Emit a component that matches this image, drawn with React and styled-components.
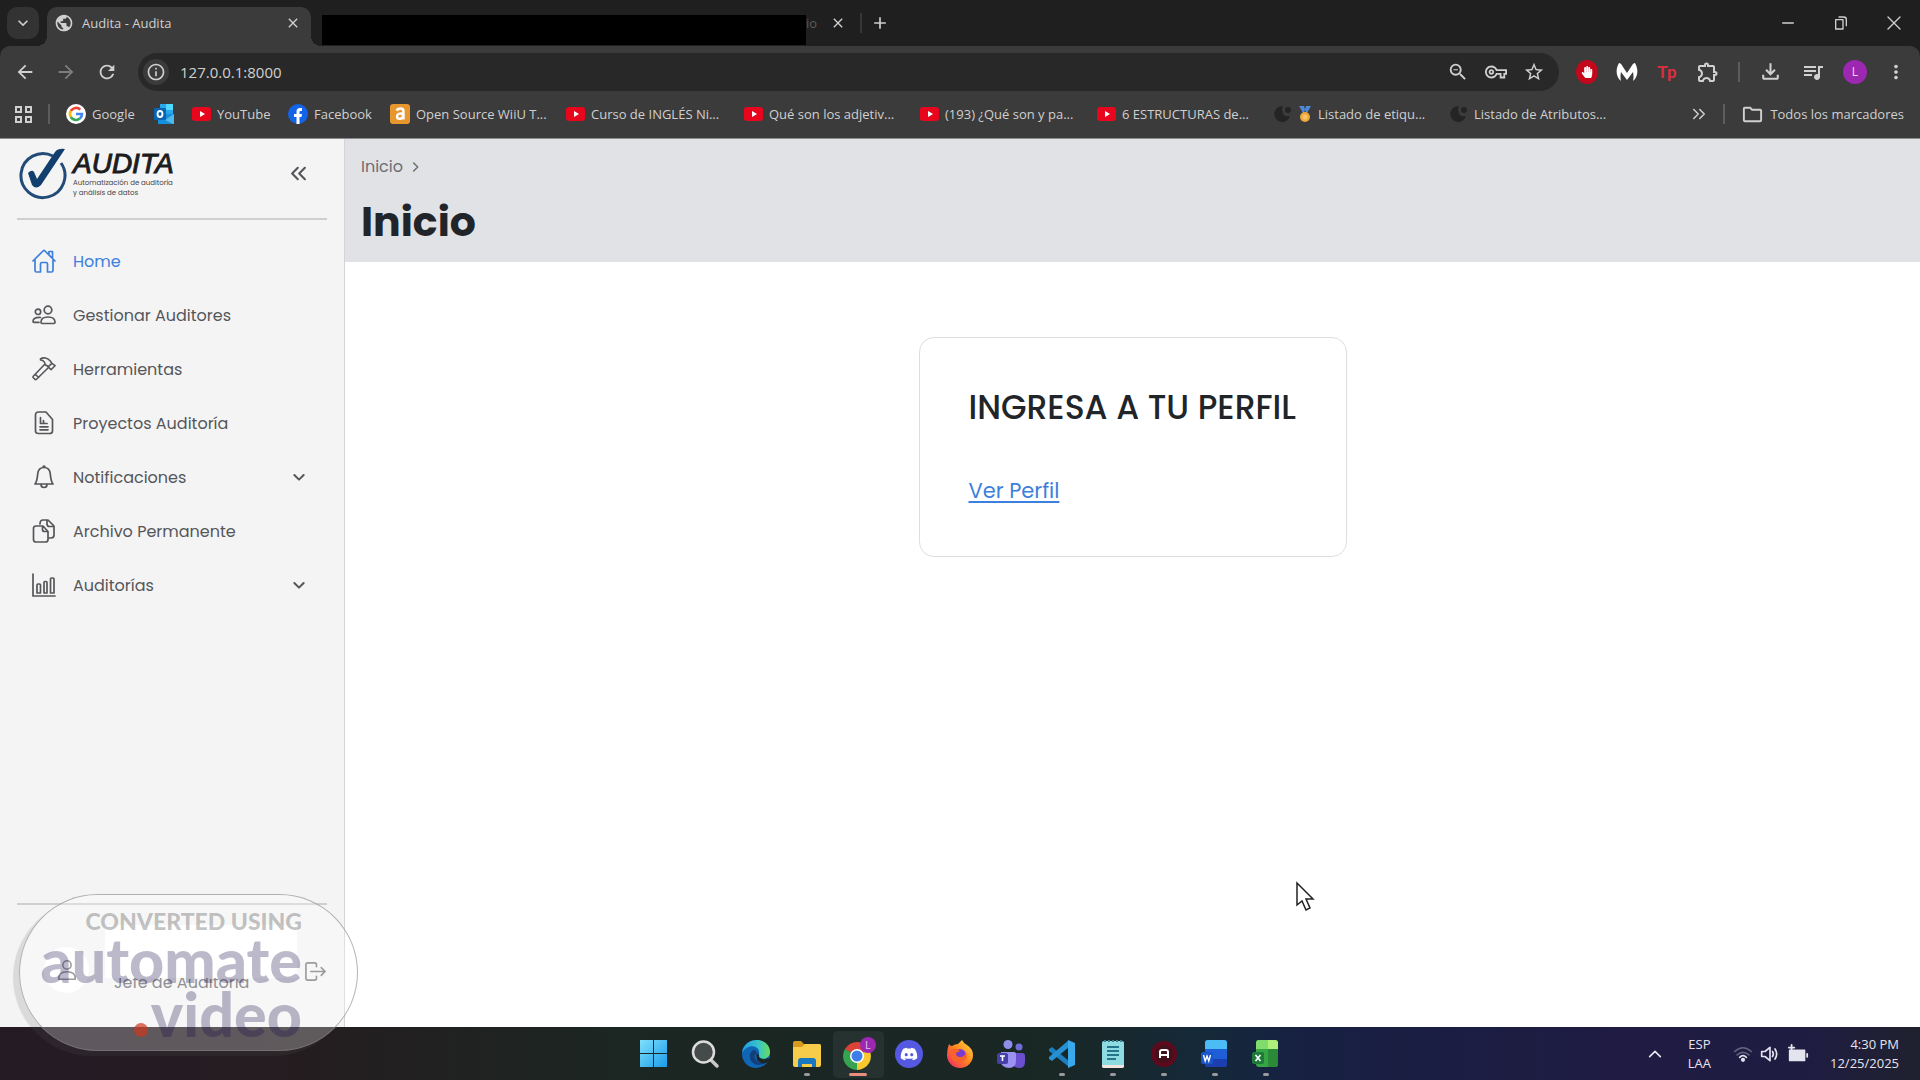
import React from 'react';
import styled, { createGlobalStyle, css } from 'styled-components';
import {
	MdAdd,
	MdArrowBack,
	MdArrowForward,
	MdClose,
	MdInfoOutline,
	MdKeyboardArrowDown,
	MdMoreVert,
	MdOutlineExtension,
	MdOutlineFileDownload,
	MdOutlineFolder,
	MdOutlineVpnKey,
	MdPublic,
	MdQueueMusic,
	MdRefresh,
	MdStarBorder,
	MdZoomOut,
} from 'react-icons/md';
import { FaDiscord, FaHandPaper } from 'react-icons/fa';

const colors = {
	frame: '#1f1f1f',
	toolbar: '#3b3b3b',
	field: '#282828',
	chromeText: '#d0d0d0',
	sidebar: '#f4f4f4',
	line: '#cfcfcf',
	text: '#55565a',
	dark: '#212529',
	link: '#3d7fdc',
}

const uiFont = '"Open Sans", "Noto Sans", sans-serif';
const appFont = 'Poppins, Inter, sans-serif';

const GlobalStyle = createGlobalStyle`
	*{
		box-sizing: border-box;
	}
	body{
		margin: 0;
		font-family: ${appFont};
		color: ${colors.dark};
		background-color: #fff;
	}
	button, input{
		font: inherit;
		color: inherit;
		border: 0;
		padding: 0;
		background: none;
	}
	button{
		display: flex;
		align-items: center;
		flex-shrink: 0;
	}
	svg{
		display: block;
		flex-shrink: 0;
	}
`

const Screen = styled.div`
	display: flex;
	flex-direction: column;
	min-height: 100vh;
	position: relative;
`

/* browser */
const Browser = styled.header`
	font-family: ${uiFont};
	color: ${colors.chromeText};
	background-color: ${colors.frame};
	border-bottom: 1px solid #8a8a8a;
`

const TabStrip = styled.div`
	display: flex;
	align-items: flex-start;
	height: 46px;
	padding: 7px 0 0 7px;
`

const TabSearch = styled.button`
	width: 32px;
	height: 32px;
	border-radius: 10px;
	justify-content: center;
	background-color: #333;
`

const Tab = styled.div`
	display: flex;
	align-items: center;
	width: 264px;
	height: 39px;
	margin-left: 8px;
	padding: 0 10px 7px 7px;
	position: relative;
	font-size: 13px;
	border-radius: 10px 10px 0 0;
	background-color: ${colors.toolbar};
	span{
		flex: 1;
		margin-left: 8px;
	}
	&:before, &:after{
		content: '';
		position: absolute;
		bottom: 0;
		width: 10px;
		height: 10px;
	}
	&:before{
		right: 100%;
		background: radial-gradient(circle at 0 0, transparent 10px, ${colors.toolbar} 10px);
	}
	&:after{
		left: 100%;
		background: radial-gradient(circle at 100% 0, transparent 10px, ${colors.toolbar} 10px);
	}
`

const HiddenTab = styled.div`
	width: 484px;
	height: 30px;
	margin: 8px 0 0 11px;
	background-color: #000;
`

const TabTail = styled.span`
	width: 20px;
	font-size: 13px;
	line-height: 32px;
	color: #5a5a5a;
`

const StripButton = styled.button`
	width: 24px;
	height: 32px;
	justify-content: center;
	margin-left: ${p => p.$gap || 0}px;
`

const Divider = styled.i`
	flex-shrink: 0;
	width: 2px;
	height: 20px;
	background-color: ${p => p.$dark ? '#363636' : '#5c5c5c'};
	margin: ${p => p.$margin || '0'};
`

const WindowControls = styled.div`
	display: flex;
	gap: 29px;
	margin-left: auto;
	padding-right: 14px;
`

const Toolbar = styled.div`
	display: flex;
	align-items: center;
	height: 46px;
	padding: 5px 13px 0 14px;
	border-radius: 10px 10px 0 0;
	background-color: ${colors.toolbar};
`

const NavButtons = styled.div`
	display: flex;
	gap: 19px;
	margin-right: 20px;
	button:nth-child(2){
		color: #7d7d7d;
	}
`

const AddressBar = styled.label`
	display: flex;
	align-items: center;
	flex: 1;
	height: 38px;
	padding: 0 14px 0 5px;
	border-radius: 19px;
	background-color: ${colors.field};
	input{
		flex: 1;
		font-size: 15px;
		margin-left: 11px;
		outline: none;
	}
`

const InfoBadge = styled.span`
	display: flex;
	align-items: center;
	justify-content: center;
	width: 26px;
	height: 26px;
	border-radius: 50%;
	background-color: ${colors.toolbar};
`

const FieldIcons = styled.div`
	display: flex;
	align-items: center;
	gap: 16px;
`

const Extensions = styled.div`
	display: flex;
	align-items: center;
	gap: 18px;
	margin-left: 17px;
`

const ProfileBadge = styled.span`
	display: flex;
	align-items: center;
	justify-content: center;
	width: 24px;
	height: 24px;
	color: #f3d9f7;
	font-size: 12px;
	border-radius: 50%;
	background-color: #9c27b0;
`

const AdBadge = styled(ProfileBadge)`
	width: 22px;
	color: #fff;
	background-color: #c4081b;
`

const TpMark = styled.span`
	width: 22px;
	font: 700 17px/24px Roboto, sans-serif;
	text-align: center;
	color: #d62f3e;
`

const Bookmarks = styled.nav`
	display: flex;
	align-items: center;
	height: 46px;
	padding: 0 16px 2px 14px;
	font-size: 13px;
	background-color: ${colors.toolbar};
`

const Bookmark = styled.a`
	display: flex;
	align-items: center;
	flex: 0 0 ${p => p.$width ? `${p.$width}px` : 'auto'};
	gap: 6px;
	color: inherit;
	white-space: nowrap;
	text-decoration: none;
`

/* audita */
const Page = styled.div`
	display: flex;
	flex: 1;
`

const Sidebar = styled.aside`
	display: flex;
	flex-direction: column;
	flex: 0 0 345px;
	min-width: 0;
	padding: 0 17px;
	border-right: 1px solid #d4d4d4;
	background-color: ${colors.sidebar};
`

const Brand = styled.div`
	display: flex;
	align-items: center;
	height: 81px;
	padding: 0 20px 10px 0;
	border-bottom: 2px solid ${colors.line};
	button{
		margin-left: auto;
		color: ${colors.text};
	}
`

const BrandText = styled.div`
	margin-left: 5px;
	color: #1c1c1e;
	strong{
		display: block;
		font: italic 400 28px/28px "Liberation Sans", Arial, sans-serif;
		-webkit-text-stroke: 1px #1c1c1e;
	}
	small{
		display: block;
		font-size: 7px;
		line-height: 10px;
		color: #444;
	}
`

const Menu = styled.nav`
	flex: 1;
	padding-top: 14px;
`

const itemStyle = css`
	display: flex;
	align-items: center;
	gap: 17px;
	width: 100%;
	height: 54px;
	padding: 0 20px 0 15px;
	font-size: 16px;
	text-align: left;
	text-decoration: none;
	color: ${p => p.$active ? colors.link : colors.text};
	span{
		flex: 1;
	}
`

const MenuLink = styled.a`${itemStyle}`
const MenuButton = styled.button`${itemStyle}`

const UserBox = styled.div`
	display: flex;
	align-items: flex-start;
	height: 124px;
	padding: 20px 0 0 27px;
	border-top: 2px solid ${colors.line};
	> button{
		margin: 35px 0 0 7px;
		color: #77777a;
	}
`

const Avatar = styled.div`
	display: flex;
	align-items: center;
	justify-content: center;
	width: 46px;
	height: 46px;
	margin: 22px 16px 0 0;
	border-radius: 50%;
	color: #77777a;
	background-color: #fff;
`

const UserName = styled.div`
	width: 192px;
	height: 53px;
	position: relative;
	background-color: #fff;
`

const UserRole = styled.div`
	margin-top: -7px;
	padding-left: 9px;
	font-size: 16px;
	line-height: 24px;
	color: #68686c;
`

const Content = styled.main`
	flex: 1;
`

const PageHeader = styled.div`
	padding: 16px 16px 12px 16px;
	background-color: #e1e2e6;
	h1{
		margin: 15px 0 0;
		font-size: 41px;
		line-height: 56px;
		font-weight: 700;
	}
`

const Breadcrumb = styled.nav`
	display: flex;
	align-items: center;
	gap: 6px;
	line-height: 24px;
	color: #6c6d72;
	a{
		color: inherit;
		text-decoration: none;
	}
`

const Card = styled.section`
	width: fit-content;
	min-width: 428px;
	margin: 75px auto 0;
	padding: 46px 49px 49px;
	border: 1px solid #dedee2;
	border-radius: 15px;
	h2{
		margin: 0 0 43px;
		font-size: 33px;
		line-height: 48px;
		font-weight: 500;
	}
	a{
		display: block;
		width: fit-content;
		font-size: 21px;
		line-height: 32px;
		color: ${colors.link};
		text-underline-offset: 3px;
	}
`

/* windows */
const Taskbar = styled.footer`
	display: grid;
	grid-template-columns: 1fr auto 1fr;
	align-items: center;
	height: 53px;
	font-family: ${uiFont};
	color: #e4e4ee;
	background: linear-gradient(90deg, #241b25 0%, #241d20 16%, #1c2622 32%, #192725 55%, #15293a 63%, #172042 68%, #1f1b42 84%, #1f1c42 94%, #20212e 100%);
`

const Apps = styled.div`
	grid-column: 2;
	display: flex;
	height: 100%;
`

const AppButton = styled.button`
	position: relative;
	justify-content: center;
	width: 51px;
	height: 53px;
	&:after{
		content: '';
		position: absolute;
		bottom: 4px;
		left: 50%;
		height: 3px;
		border-radius: 2px;
		width: ${p => p.$state === 'active' ? 18 : 6}px;
		margin-left: ${p => p.$state === 'active' ? -9 : -3}px;
		background-color: ${p => p.$state === 'active' ? '#ea8d7e' : p.$state === 'open' ? '#9a9a9e' : 'transparent'};
	}
	${p => p.$state === 'active' && css`
		height: 47px;
		margin-top: 4px;
		border-radius: 5px;
		background-color: rgba(255, 255, 255, 0.05);
		&:after{
			bottom: 2px;
		}
	`}
`

const Tray = styled.div`
	display: flex;
	align-items: center;
	justify-content: flex-end;
	padding-right: 21px;
	font-size: 13px;
	line-height: 19px;
`

const Language = styled.button`
	display: block;
	text-align: center;
	margin: 0 22px 0 25px;
	span{
		display: block;
	}
`

const TrayIcons = styled.button`
	gap: 7px;
	margin-right: 21px;
`

const Clock = styled.time`
	text-align: right;
	span{
		display: block;
	}
`

const Pointer = styled.div`
	position: absolute;
	left: 1295px;
	top: 881px;
`

/* converter badge over the page */
const Watermark = styled.div`
	position: absolute;
	left: 19px;
	bottom: 29px;
	width: 339px;
	height: 157px;
	padding: 14px 55px 0 0;
	border: 1px solid rgba(130, 130, 130, 0.6);
	border-radius: 79px;
	text-align: right;
	font-family: Lato, sans-serif;
	font-weight: 900;
	background-color: rgba(255, 255, 255, 0.27);
	box-shadow: -6px 5px 1px rgba(90, 90, 90, 0.17);
	pointer-events: none;
	p{
		margin: 0;
		font-size: 23px;
		line-height: 24px;
		white-space: nowrap;
		color: rgba(110, 110, 110, 0.42);
	}
	div{
		font-size: 61px;
		line-height: 54px;
		color: rgba(25, 15, 75, 0.29);
	}
	b{
		display: inline-block;
		width: 14px;
		height: 14px;
		margin-right: 3px;
		border-radius: 50%;
		background-color: rgba(205, 55, 30, 0.7);
	}
`

const Line = ({ size = 24, width = 1.7, children }) => (
	<svg width={size} height={size} viewBox="0 0 24 24" fill="none" stroke="currentColor" strokeWidth={width} strokeLinecap="round" strokeLinejoin="round">
		{children}
	</svg>
)

const HomeIcon = () => (
	<Line>
		<path d="M1 12 11 2q1-1 2 0l10 10M3 11v10.500q0 1.500 1.500 1.500H8.500v-8q0-1.500 1.500-1.500h4q1.500 0 1.500 1.500v8h4q1.500 0 1.500-1.500V11M17 6V2.500h3.500V9" />
	</Line>
)

const PeopleIcon = () => (
	<Line>
		<circle cx="16" cy="7" r="3.800" />
		<circle cx="6" cy="8.800" r="2.700" />
		<path d="M10 20.500q-1 0-1-1.200 0-5.300 7-5.300t7 5.300q0 1.200-1 1.200zM8.500 14.500q-7.500-.5-7.500 4 0 .8 1 .8h5" />
	</Line>
)

const HammerIcon = () => (
	<Line width={1.6}>
		<path d="M12.500 7.500 1.300 19.200q-.6.8 0 1.500l1.600 1.600q.8.600 1.600-.1L16 11M3.500 17.500l3.200 3" />
		<path d="M8.500 1.800q2-1.300 5-.8 3 .6 5 3.200l1.300 2.300 1.200.6 2 1.600-4 4-1.700-1.700-.8-1.300L13 7.500q0-2.200-1.500-3.300Q10 3 8.500 3zM16 9.800l4-3.500" />
	</Line>
)

const FileIcon = () => (
	<Line>
		<path d="M6.500 1H14l6.500 7.500v11.500q0 2.500-3 2.500h-11q-3 0-3-2.500V4q0-3 3-3zM8.500 6.500v6h6.500M11.500 9.500v2.500M8 15.800h8M8 18.800h8" />
	</Line>
)

const BellIcon = () => (
	<Line>
		<path d="M12 2.500c-4.500 0-6 3-6.300 6.500C5.300 13.500 4.700 17 3 19h18c-1.700-2-2.300-5.500-2.700-10-.3-3.500-1.800-6.500-6.300-6.500zM11 2.500Q11 1 12 1t1 1.500M9 19.500q0 3 3 3t3-3" />
	</Line>
)

const FilesIcon = () => (
	<Line>
		<path d="M4 7h7l5 5.500v8q0 2.500-2.500 2.500H4q-2.500 0-2.500-2.500v-11Q1.500 7 4 7zM10.500 7.500v3q0 2 2 2h3M8 5q0-4 3-4h5l6 6v9q0 3-3 3h-2.500M15 1.500V5q0 2.500 2.500 2.500H21" />
	</Line>
)

const ChartIcon = () => (
	<Line>
		<path d="M1 1v22h22M5 12q0-1 1-1h1.500q1 0 1 1v8H5zM12 9.500q0-1 1-1h1q1 0 1 1V20h-3zM18.500 6q0-1 1-1h1.500q1 0 1 1v14h-3.500z" />
	</Line>
)

const Chevron = ({ d = 'm5 9 7 7 7-7', size = 16, width = 3 }) => (
	<Line size={size} width={width}><path d={d} /></Line>
)

const LogoutIcon = () => (
	<Line size={23}>
		<path d="M13 7V5q0-2-2-2H4Q2 3 2 5v14q0 2 2 2h7q2 0 2-2v-2M7 12h15M18 8l4 4-4 4" />
	</Line>
)

const UserIcon = () => (
	<Line size={22}>
		<circle cx="12" cy="6.500" r="4.500" />
		<path d="M3 22q-.5-8 9-8t9 8z" />
	</Line>
)

const AuditaLogo = () => (
	<svg width="51" height="52" viewBox="0 0 51 52">
		<path d="M36 8A22 22 0 1 0 44 15" fill="none" stroke="#234b78" strokeWidth="3" />
		<path d="M11 25q4-4 6-1l3 7L38 4q3-4 10-3L24 37q-5 5-9 0z" fill="#123f6e" />
	</svg>
)

const YouTube = () => (
	<svg width="19" height="14" viewBox="0 0 19 14">
		<rect width="19" height="14" rx="3" fill="#e8061c" />
		<path d="m8 4 5 3-5 3z" fill="#fff" />
	</svg>
)

const Google = () => (
	<svg width="20" height="20" viewBox="0 0 20 20">
		<circle cx="10" cy="10" r="10" fill="#fff" />
		<g fill="none" strokeWidth="2.600">
			<path d="M14.300 5.700A6 6 0 0 0 4.800 7" stroke="#ea4335" />
			<path d="M4.800 7a6 6 0 0 0 0 6" stroke="#fbbc05" />
			<path d="M4.800 13a6 6 0 0 0 9 1.600" stroke="#34a853" />
			<path d="M13.800 14.600A6 6 0 0 0 16 10h-6" stroke="#4285f4" />
		</g>
	</svg>
)

const Outlook = () => (
	<svg width="20" height="20" viewBox="0 0 20 20">
		<path d="M6 0h13v10H6z" fill="#28a8ea" />
		<path d="M12 0h7v6h-7z" fill="#50d9ff" />
		<path d="M4 10h16v8q0 2-2 2H4z" fill="#1490df" />
		<path d="m20 10-9 6 8 4h1z" fill="#50b8ea" />
		<rect y="4" width="12" height="12" rx="1" fill="#0a64b4" />
		<ellipse cx="6" cy="10" rx="2.500" ry="3" fill="none" stroke="#fff" strokeWidth="1.800" />
	</svg>
)

const Facebook = () => (
	<svg width="20" height="20" viewBox="0 0 20 20">
		<circle cx="10" cy="10" r="10" fill="#1464e8" />
		<path d="M8.500 20v-7H6v-3h2.500V7.500Q8.500 4 12 4h2v3h-1.500q-1 0-1 1v2H14l-.5 3h-2v7z" fill="#fff" />
	</svg>
)

const OpenSource = () => (
	<svg width="20" height="20" viewBox="0 0 20 20">
		<rect width="20" height="20" rx="3" fill="#e8962e" />
		<path d="M6.500 6.500Q8 4.500 10.500 4.500q3 0 3 3v8M13 9.500q-6-.5-6 3 0 2.300 2.500 2.300 3.500 0 3.500-4" fill="none" stroke="#fff" strokeWidth="2.400" />
	</svg>
)

const DarkSite = () => (
	<svg width="18" height="18" viewBox="0 0 18 18" fill="#242424">
		<path d="M9 1a8 8 0 1 0 7 10q-4 1-6-1-3-3-1-9z" />
		<circle cx="14" cy="5" r="3" />
	</svg>
)

const Medal = () => (
	<svg width="14" height="18" viewBox="0 0 14 18">
		<path d="M1 1h5l2 7H5zM13 1H8L6 8h3z" fill="#4f88d4" />
		<circle cx="7" cy="12" r="5" fill="#eda83d" />
		<circle cx="7" cy="12" r="2.500" fill="#f8c565" />
	</svg>
)

const Malware = () => (
	<svg width="22" height="20" viewBox="0 0 22 20">
		<path d="M5 19C-1 14 0 6 3 1q2 0 4 4l4 6 4-6q2-4 4-4c3 5 4 13-2 18q1-4 0-9l-6 8-6-8q-1 5 0 9z" fill="#fff" />
	</svg>
)

const AppsGrid = () => (
	<svg width="19" height="19" viewBox="0 0 19 19" fill="none" stroke="currentColor" strokeWidth="2">
		<path d="M2 2h5v5H2zM12 2h5v5h-5zM2 12h5v5H2zM12 12h5v5h-5z" />
	</svg>
)

const bookmarks = [
	{ icon: <Google />, label: 'Google', width: 88 },
	{ icon: <Outlook />, width: 38 },
	{ icon: <YouTube />, label: 'YouTube', width: 96 },
	{ icon: <Facebook />, label: 'Facebook', width: 102 },
	{ icon: <OpenSource />, label: 'Open Source WiiU T...', width: 176 },
	{ icon: <YouTube />, label: 'Curso de INGLÉS Ni...', width: 178 },
	{ icon: <YouTube />, label: 'Qué son los adjetiv...', width: 176 },
	{ icon: <YouTube />, label: '(193) ¿Qué son y pa...', width: 177 },
	{ icon: <YouTube />, label: '6 ESTRUCTURAS de...', width: 177 },
	{ icon: <><DarkSite /><Medal /></>, label: 'Listado de etiqu...', width: 176 },
	{ icon: <DarkSite />, label: 'Listado de Atributos...', width: 240 },
]

const menu = [
	{ icon: <HomeIcon />, label: 'Home', active: true },
	{ icon: <PeopleIcon />, label: 'Gestionar Auditores' },
	{ icon: <HammerIcon />, label: 'Herramientas' },
	{ icon: <FileIcon />, label: 'Proyectos Auditoría' },
	{ icon: <BellIcon />, label: 'Notificaciones', nested: true },
	{ icon: <FilesIcon />, label: 'Archivo Permanente' },
	{ icon: <ChartIcon />, label: 'Auditorías', nested: true },
]

const AppIcon = ({ children }) => (
	<svg width="30" height="30" viewBox="0 0 30 30">{children}</svg>
)

const WindowsLogo = () => (
	<AppIcon>
		<linearGradient id="win" x2="1" y2="1"><stop stopColor="#7fe0fb" /><stop offset="1" stopColor="#1a9bea" /></linearGradient>
		<path d="M1 1h13v13H1zM15 1h13v13H15zM1 15h13v13H1zM15 15h13v13H15z" fill="url(#win)" />
	</AppIcon>
)

const SearchIcon = () => (
	<AppIcon>
		<path d="m20 20 7 7" stroke="#c8c8c8" strokeWidth="3.500" strokeLinecap="round" />
		<circle cx="13.500" cy="13" r="10.500" fill="#454b4a" stroke="#dcdcdc" strokeWidth="2.500" />
	</AppIcon>
)

const EdgeIcon = () => (
	<AppIcon>
		<linearGradient id="edgeTop" x2="1"><stop stopColor="#1f9de0" /><stop offset=".6" stopColor="#39c6c8" /><stop offset="1" stopColor="#6bdc5c" /></linearGradient>
		<circle cx="15" cy="15" r="14" fill="#0f66b5" />
		<path d="M1 14C3-3 29-3 29 13c0 6-6 8-10 6-3-2 0-3-1-7-2-7-13-6-17 2z" fill="url(#edgeTop)" />
		<path d="M11 12c-5 5-1 14 7 14 4 0 7-2 9-4-5 3-12 2-13-3-1-3 1-4 2-5-1-3-3-4-5-2z" fill="#123f7c" />
		<path d="M16 14q3 2 2 4 4 4 9 1l2 1-1 3q-8 3-12-2-1-4 0-7z" fill="#1c2622" />
	</AppIcon>
)

const ExplorerIcon = () => (
	<AppIcon>
		<path d="M1 4q0-2 2-2h6l3 3h15q2 0 2 2v6H1z" fill="#d79a1e" />
		<path d="M1 8h9l3-3h14q2 0 2 2v19q0 2-2 2H3q-2 0-2-2z" fill="#f8cc4b" />
		<path d="M6 28v-6q0-3 3-3h12q3 0 3 3v6h-4v-3H10v3z" fill="#1779c2" />
	</AppIcon>
)

const ChromeIcon = () => (
	<svg width="36" height="36" viewBox="0 0 36 36">
		<path d="M17 19 4.900 12A14 14 0 0 1 29.100 12z" fill="#dc4237" />
		<path d="M17 19 29.100 12A14 14 0 0 1 17 33z" fill="#f7c92e" />
		<path d="M17 19v14A14 14 0 0 1 4.900 12z" fill="#35a450" />
		<circle cx="17" cy="19" r="7" fill="#fff" />
		<circle cx="17" cy="19" r="5.500" fill="#3d7eea" />
		<circle cx="28" cy="8" r="8" fill="#9c27b0" />
		<text x="25" y="12" fontSize="11" fill="#e7c4ee">L</text>
	</svg>
)

const DiscordBadge = styled.span`
	display: flex;
	align-items: center;
	justify-content: center;
	width: 28px;
	height: 28px;
	color: #fff;
	border-radius: 50%;
	background-color: #5558e0;
`

const FirefoxIcon = () => (
	<AppIcon>
		<linearGradient id="fox" x1="1" x2="0" y2="1"><stop stopColor="#ffe14a" /><stop offset=".45" stopColor="#ff8a1e" /><stop offset="1" stopColor="#ee1f6a" /></linearGradient>
		<path d="M4 5q1 2 3 2 3-2 6-2l4-4q2 4 5 5 6 4 6 10a13 13 0 0 1-26 0Q2 10 4 5z" fill="url(#fox)" />
		<circle cx="15" cy="16" r="6" fill="#7a3bd0" />
		<path d="M5 11q7-3 10 1l-4 2q0 4 4 4 5 0 6-5 2 5-1 8-5 5-11 1-4-3-4-11z" fill="#f8622b" />
	</AppIcon>
)

const TeamsIcon = () => (
	<AppIcon>
		<circle cx="12" cy="5.500" r="4.500" fill="#8f8eea" />
		<circle cx="23" cy="8" r="3.500" fill="#6f6cd8" />
		<path d="M17 14h9q3 0 3 3v6q0 6-6 6-5 0-6-4z" fill="#6a4fd0" />
		<path d="M5 13h13q2 0 2 2v7q0 7-7 7T4 22z" fill="#9b91f0" />
		<rect x="1" y="14" width="11" height="11" rx="2" fill="#4540a6" />
		<path d="M4 17h5M6.500 17v5" stroke="#fff" strokeWidth="1.600" />
	</AppIcon>
)

const CodeIcon = () => (
	<AppIcon>
		<path d="m2 10 3-2 17 14v6L2 12z" fill="#1b7fc0" />
		<path d="M22 1v7L5 22l-3-2v-2z" fill="#2591d2" />
		<path d="m21 1 7 3v22l-7 3z" fill="#39a9ec" />
	</AppIcon>
)

const NotepadIcon = () => (
	<AppIcon>
		<rect x="4" y="2" width="22" height="27" rx="2" fill="#8fdbe2" />
		<path d="M4 26h22v1q0 2-2 2H6q-2 0-2-2z" fill="#f0e5df" />
		<path d="M6 2h2M10 2h2M14 2h2M18 2h2M22 2h2" stroke="#377f8a" strokeWidth="2" />
		<path d="M9 8h12M9 12h12M9 16h12M9 20h9" stroke="#24778a" strokeWidth="2" />
	</AppIcon>
)

const RecorderIcon = () => (
	<AppIcon>
		<circle cx="15" cy="15" r="13" fill="#5e0a1c" />
		<circle cx="15" cy="15" r="9" fill="#43101b" />
		<path d="M11 19v-6q0-2 2-2h4q2 0 2 2v6M11 16h8" fill="none" stroke="#fff" strokeWidth="2" />
	</AppIcon>
)

const WordIcon = () => (
	<AppIcon>
		<rect x="5" y="1" width="22" height="27" rx="3" fill="#1e5fd8" />
		<path d="M8 1h16q3 0 3 3v6H5V4q0-3 3-3z" fill="#4cbcf5" />
		<path d="M5 20h22v5q0 3-3 3H8q-3 0-3-3z" fill="#1b3fae" />
		<rect x="1" y="13" width="12" height="12" rx="2" fill="#1a56c8" />
		<path d="m3.500 16 1.700 6L7 17l1.800 5 1.700-6" fill="none" stroke="#fff" strokeWidth="1.400" />
	</AppIcon>
)

const ExcelIcon = () => (
	<AppIcon>
		<rect x="5" y="1" width="22" height="27" rx="3" fill="#37a544" />
		<path d="M8 1h9v9H5V4q0-3 3-3z" fill="#7fdb6c" />
		<path d="M17 1h7q3 0 3 3v6H17z" fill="#b0ee7a" />
		<path d="M17 10v18h7q3 0 3-3V10z" fill="#2b8a37" />
		<rect x="1" y="13" width="12" height="12" rx="2" fill="#1e7a3a" />
		<path d="m4.500 16 5 6M9.500 16l-5 6" stroke="#fff" strokeWidth="1.600" />
	</AppIcon>
)

const apps = [
	{ name: 'Inicio', icon: <WindowsLogo /> },
	{ name: 'Buscar', icon: <SearchIcon /> },
	{ name: 'Edge', icon: <EdgeIcon /> },
	{ name: 'Explorador', icon: <ExplorerIcon />, state: 'open' },
	{ name: 'Chrome', icon: <ChromeIcon />, state: 'active' },
	{ name: 'Discord', icon: <DiscordBadge><FaDiscord size={18} /></DiscordBadge> },
	{ name: 'Firefox', icon: <FirefoxIcon /> },
	{ name: 'Teams', icon: <TeamsIcon /> },
	{ name: 'VS Code', icon: <CodeIcon />, state: 'open' },
	{ name: 'Bloc de notas', icon: <NotepadIcon />, state: 'open' },
	{ name: 'Grabadora', icon: <RecorderIcon />, state: 'open' },
	{ name: 'Word', icon: <WordIcon />, state: 'open' },
	{ name: 'Excel', icon: <ExcelIcon />, state: 'open' },
]

const BrowserBar = () => (
	<Browser>
		<TabStrip>
			<TabSearch aria-label="Buscar pestañas"><MdKeyboardArrowDown size={20} /></TabSearch>
			<Tab>
				<MdPublic size={20} />
				<span>Audita - Audita</span>
				<button aria-label="Cerrar pestaña"><MdClose size={16} /></button>
			</Tab>
			<HiddenTab />
			<TabTail>io</TabTail>
			<StripButton aria-label="Cerrar pestaña"><MdClose size={16} /></StripButton>
			<Divider $dark $margin="6px 0 0 10px" />
			<StripButton $gap={6} aria-label="Nueva pestaña"><MdAdd size={20} /></StripButton>
			<WindowControls>
				<StripButton aria-label="Minimizar"><Line size={16} width={2}><path d="M4 12h16" /></Line></StripButton>
				<StripButton aria-label="Restaurar"><Line size={16} width={2}><path d="M4 7h11v14H4zM9 3h7q4 0 4 4v9" /></Line></StripButton>
				<StripButton aria-label="Cerrar"><Line size={16} width={2}><path d="m3 3 18 18M21 3 3 21" /></Line></StripButton>
			</WindowControls>
		</TabStrip>
		<Toolbar>
			<NavButtons>
				<button aria-label="Atrás"><MdArrowBack size={22} /></button>
				<button aria-label="Adelante"><MdArrowForward size={22} /></button>
				<button aria-label="Recargar"><MdRefresh size={22} /></button>
			</NavButtons>
			<AddressBar>
				<InfoBadge><MdInfoOutline size={20} /></InfoBadge>
				<input type="text" aria-label="Dirección" defaultValue="127.0.0.1:8000" />
				<FieldIcons>
					<MdZoomOut size={22} />
					<MdOutlineVpnKey size={22} />
					<MdStarBorder size={22} />
				</FieldIcons>
			</AddressBar>
			<Extensions>
				<AdBadge><FaHandPaper size={12} /></AdBadge>
				<Malware />
				<TpMark>Tp</TpMark>
				<MdOutlineExtension size={24} />
				<Divider />
				<MdOutlineFileDownload size={25} />
				<MdQueueMusic size={24} />
				<ProfileBadge>L</ProfileBadge>
				<MdMoreVert size={22} />
			</Extensions>
		</Toolbar>
		<Bookmarks>
			<AppsGrid />
			<Divider $margin="0 16px 0 15px" />
			{bookmarks.map((b, i) => (
				<Bookmark key={i} href="#" $width={b.width} aria-label={b.label || 'Outlook'}>
					{b.icon}
					{b.label}
				</Bookmark>
			))}
			<Chevron d="m5 6 6 6-6 6M13 6l6 6-6 6" size={18} width={2} />
			<Divider $margin="0 16px 0 auto" />
			<Bookmark href="#">
				<MdOutlineFolder size={23} />
				Todos los marcadores
			</Bookmark>
		</Bookmarks>
	</Browser>
)

const SideMenu = () => (
	<Sidebar>
		<Brand>
			<AuditaLogo />
			<BrandText>
				<strong>AUDITA</strong>
				<small>Automatización de auditoría</small>
				<small>y análisis de datos</small>
			</BrandText>
			<button aria-label="Contraer"><Chevron d="m11 4-8 8 8 8M21 4l-8 8 8 8" size={17} /></button>
		</Brand>
		<Menu>
			{menu.map(item => item.nested ? (
				<MenuButton key={item.label}>
					{item.icon}
					<span>{item.label}</span>
					<Chevron />
				</MenuButton>
			) : (
				<MenuLink key={item.label} href="#" $active={item.active}>
					{item.icon}
					<span>{item.label}</span>
				</MenuLink>
			))}
		</Menu>
		<UserBox>
			<Avatar><UserIcon /></Avatar>
			<div>
				<UserName />
				<UserRole>Jefe de Auditoría</UserRole>
			</div>
			<button aria-label="Salir"><LogoutIcon /></button>
		</UserBox>
	</Sidebar>
)

const WindowsBar = () => (
	<Taskbar>
		<Apps>
			{apps.map(app => (
				<AppButton key={app.name} aria-label={app.name} $state={app.state}>{app.icon}</AppButton>
			))}
		</Apps>
		<Tray>
			<Chevron d="m4 16 8-8 8 8" size={16} width={2.5} />
			<Language>
				<span>ESP</span>
				<span>LAA</span>
			</Language>
			<TrayIcons aria-label="Red, volumen y batería">
				<Line size={20} width={2}>
					<path d="M2 9q10-9 20 0M5 13q7-6 14 0" opacity=".35" />
					<path d="M8 16q4-4 8 0" />
					<circle cx="12" cy="19" r="1.500" fill="currentColor" />
				</Line>
				<Line size={20} width={2}>
					<path d="M2 9h4l6-5v16l-6-5H2zM15 9q2 3 0 6M18 6q4 6 0 12" />
				</Line>
				<Line size={22} width={2}>
					<path d="M3 8h16v11H3z" fill="currentColor" />
					<path d="M22 12v3M5 2v5M2 5h6" />
				</Line>
			</TrayIcons>
			<Clock>
				<span>4:30 PM</span>
				<span>12/25/2025</span>
			</Clock>
		</Tray>
	</Taskbar>
)

const App = () => {
	return (
		<Screen>
			<GlobalStyle />
			<BrowserBar />
			<Page>
				<SideMenu />
				<Content>
					<PageHeader>
						<Breadcrumb>
							<a href="#">Inicio</a>
							<Chevron d="m8 5 7 7-7 7" size={14} width={2.5} />
						</Breadcrumb>
						<h1>Inicio</h1>
					</PageHeader>
					<Card>
						<h2>INGRESA A TU PERFIL</h2>
						<a href="#">Ver Perfil</a>
					</Card>
				</Content>
			</Page>
			<WindowsBar />
			<Watermark>
				<p>CONVERTED USING</p>
				<div>automate</div>
				<div><b />video</div>
			</Watermark>
			<Pointer>
				<svg width="20" height="31" viewBox="0 0 20 31">
					<path d="M2 2v22l5-4 4 9 4-2-4-9h7z" fill="#fff" stroke="#222" strokeWidth="1.500" />
				</svg>
			</Pointer>
		</Screen>
	);
}

export default App;
